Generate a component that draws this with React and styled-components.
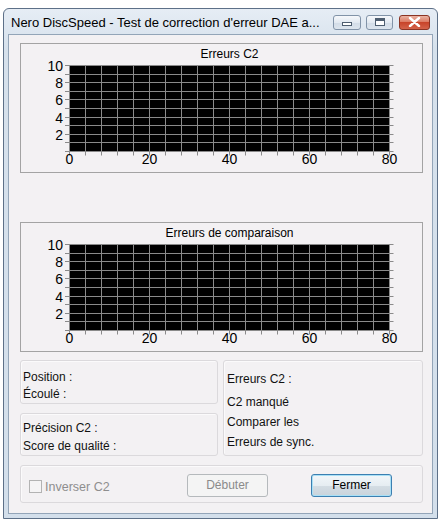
import React from 'react';
import styled, { createGlobalStyle } from 'styled-components';

const GlobalStyle = createGlobalStyle`
    html, body {
        margin: 0;
        padding: 0;
        background: #ffffff;
    }
    body {
        font-family: 'Liberation Sans', Arial, sans-serif;
        font-size: 12px;
        color: #000;
    }
`;

const PLOT_X = 48;
const PLOT_Y = 21;
const COL = 16;
const ROW = 8.6;

const Chart = ({ title }) => {
    const cols = Array.from({ length: 21 }, (_, i) => PLOT_X + COL * i + 0.5);
    const rows = Array.from({ length: 11 }, (_, j) => Math.round(PLOT_Y + ROW * j) + 0.5);
    const bottom = rows[rows.length - 1];
    const right = cols[cols.length - 1];

    return (
        <ChartBox>
            <svg width="401" height="128" viewBox="0 0 401 128">
                <text x="208.5" y="13.5" textAnchor="middle" fontSize="12" fontFamily="Liberation Sans, Arial, sans-serif" fill="#000">
                    {title}
                </text>
                <rect x={PLOT_X} y={PLOT_Y} width={right - PLOT_X + 0.5} height={bottom - PLOT_Y + 0.5} fill="#000" />
                {cols.map((x) => (
                    <line key={'v' + x} x1={x} y1={PLOT_Y} x2={x} y2={bottom + 4} stroke="#8a8a8a" strokeWidth="1" />
                ))}
                {rows.map((y) => (
                    <line key={'h' + y} x1={PLOT_X - 4} y1={y} x2={right + 4} y2={y} stroke="#8a8a8a" strokeWidth="1" />
                ))}
                {[10, 8, 6, 4, 2].map((v, k) => (
                    <text key={'y' + v} x="42" y={rows[k * 2] + 5.5} textAnchor="end" fontSize="14" fontFamily="Liberation Sans, Arial, sans-serif" fill="#000">
                        {v}
                    </text>
                ))}
                {[0, 20, 40, 60, 80].map((v, k) => (
                    <text key={'x' + v} x={cols[k * 5]} y="120" textAnchor="middle" fontSize="14" fontFamily="Liberation Sans, Arial, sans-serif" fill="#000">
                        {v}
                    </text>
                ))}
            </svg>
        </ChartBox>
    );
};

const App = () => {
    return (
        <>
            <GlobalStyle />
            <Window>
                <TitleBar>
                    <TitleText>Nero DiscSpeed - Test de correction d'erreur DAE a...</TitleText>
                    <CaptionButtons>
                        <CaptionButton $w={28}>
                            <MinGlyph />
                        </CaptionButton>
                        <CaptionButton $w={27}>
                            <MaxGlyph />
                        </CaptionButton>
                        <CloseButton>
                            <svg width="13" height="10" viewBox="0 0 13 10">
                                <path d="M2 1 L11 9 M11 1 L2 9" stroke="#fff" strokeWidth="2.4" strokeLinecap="round" />
                            </svg>
                        </CloseButton>
                    </CaptionButtons>
                </TitleBar>
                <Client>
                    <Chart title="Erreurs C2" />
                    <Spacer $h={49} />
                    <Chart title="Erreurs de comparaison" />
                    <Spacer $h={8} />
                    <InfoGrid>
                        <InfoColumn>
                            <InfoBox $pt={8} $lh={17}>
                                <InfoLine>Position :</InfoLine>
                                <InfoLine>Écoulé :</InfoLine>
                            </InfoBox>
                            <InfoBox $pt={5} $lh={18}>
                                <InfoLine>Précision C2 :</InfoLine>
                                <InfoLine>Score de qualité :</InfoLine>
                            </InfoBox>
                        </InfoColumn>
                        <InfoBox $pt={8} $lh={20} $pl={3}>
                            <InfoLine $mb={3}>Erreurs C2 :</InfoLine>
                            <InfoLine>C2 manqué</InfoLine>
                            <InfoLine>Comparer les</InfoLine>
                            <InfoLine>Erreurs de sync.</InfoLine>
                        </InfoBox>
                    </InfoGrid>
                    <Spacer $h={10} />
                    <ActionBar>
                        <CheckLabel>
                            <CheckBox />
                            Inverser C2
                        </CheckLabel>
                        <ButtonGroup>
                            <PushButton disabled>Débuter</PushButton>
                            <PushButton $default>Fermer</PushButton>
                        </ButtonGroup>
                    </ActionBar>
                </Client>
            </Window>
        </>
    );
};

export default App;

const Window = styled.div`
    box-sizing: border-box;
    margin: 8px 0 0 3px;
    width: 435px;
    height: 511px;
    border: 1px solid #5d7088;
    border-radius: 6px 6px 0 0;
    background: linear-gradient(180deg, #e6edf5 0%, #d6e1ec 40px, #d3dfeb 100%);
    padding: 0 4px 4px;
    display: flex;
    flex-direction: column;
`;

const TitleBar = styled.div`
    height: 25px;
    display: flex;
    align-items: center;
    padding: 0 3px 0 3px;
`;

const TitleText = styled.div`
    font-family: 'Liberation Sans', Arial, sans-serif;
    font-size: 13px;
    color: #000;
    white-space: nowrap;
    margin-top: 1px;
`;

const CaptionButtons = styled.div`
    margin-left: auto;
    display: flex;
    align-items: center;
    gap: 5px;
    margin-top: 1px;
`;

const CaptionButton = styled.div`
    box-sizing: border-box;
    width: ${({ $w }) => $w}px;
    height: 15px;
    border: 1px solid #8193a8;
    border-radius: 3px;
    background: linear-gradient(180deg, #f6f8fb 0%, #e2e9f1 50%, #d2dce7 51%, #dde5ee 100%);
    display: flex;
    align-items: center;
    justify-content: center;
`;

const CloseButton = styled(CaptionButton).attrs({ $w: 31 })`
    margin-left: 1px;
    border-color: #8a3424;
    background: linear-gradient(180deg, #eab3a3 0%, #dc7b63 45%, #c8442a 50%, #d4634a 100%);
`;

const MinGlyph = styled.div`
    box-sizing: border-box;
    width: 10px;
    height: 4px;
    margin-top: 4px;
    border: 1px solid #4e5e70;
    background: #fff;
`;

const MaxGlyph = styled.div`
    box-sizing: border-box;
    width: 10px;
    height: 8px;
    border: 1px solid #4e5e70;
    border-top-width: 3px;
    background: #fff;
`;

const Client = styled.div`
    flex: 1;
    border: 1px solid #93a5b8;
    background: #f3f1f3;
    padding: 8px 9px 0 11px;
    display: flex;
    flex-direction: column;
`;

const ChartBox = styled.div`
    box-sizing: border-box;
    width: 403px;
    height: 130px;
    border: 1px solid #a3a3a3;
    svg {
        display: block;
    }
`;

const Spacer = styled.div`
    height: ${({ $h }) => $h}px;
    flex-shrink: 0;
`;

const InfoGrid = styled.div`
    display: grid;
    grid-template-columns: 198px 200px;
    gap: 5px;
    height: 95px;
`;

const InfoColumn = styled.div`
    display: flex;
    flex-direction: column;
    gap: 9px;
`;

const InfoBox = styled.div`
    box-sizing: border-box;
    flex: 1;
    border: 1px solid #dbd9dc;
    border-radius: 3px;
    box-shadow: inset 1px 1px 0 #fbfafb;
    padding: ${({ $pt }) => $pt}px 2px 0 ${({ $pl }) => $pl || 2}px;
    line-height: ${({ $lh }) => $lh}px;
    font-size: 12px;
    color: #111;
`;

const InfoLine = styled.div`
    white-space: nowrap;
    margin-bottom: ${({ $mb }) => $mb || 0}px;
`;

const ActionBar = styled.div`
    box-sizing: border-box;
    height: 38px;
    border: 1px solid #dbd9dc;
    border-radius: 3px;
    box-shadow: inset 1px 1px 0 #fbfafb;
    display: flex;
    align-items: center;
    padding: 2px 30px 0 8px;
`;

const CheckLabel = styled.label`
    display: flex;
    align-items: center;
    gap: 3px;
    margin-top: 3px;
    font-size: 12.5px;
    color: #8e8e8e;
`;

const CheckBox = styled.span`
    box-sizing: border-box;
    width: 13px;
    height: 13px;
    border: 1px solid #b3b3b3;
    background: #f5f4f5;
`;

const ButtonGroup = styled.div`
    margin-left: auto;
    display: flex;
    gap: 43px;
`;

const PushButton = styled.button`
    box-sizing: border-box;
    width: 81px;
    height: 23px;
    padding: 0;
    font-family: 'Liberation Sans', Arial, sans-serif;
    font-size: 12px;
    border-radius: 3px;
    border: 1px solid ${({ $default }) => ($default ? '#3c7fb1' : '#b5b9bc')};
    color: ${({ $default }) => ($default ? '#000' : '#8a8a8a')};
    background: ${({ $default }) =>
        $default
            ? 'linear-gradient(180deg, #f2f6f9 0%, #e6edf2 50%, #d4dde4 51%, #c9d3db 100%)'
            : '#f4f4f4'};
    box-shadow: ${({ $default }) => ($default ? 'inset 0 0 0 1px #a8e0f6' : 'none')};
`;
